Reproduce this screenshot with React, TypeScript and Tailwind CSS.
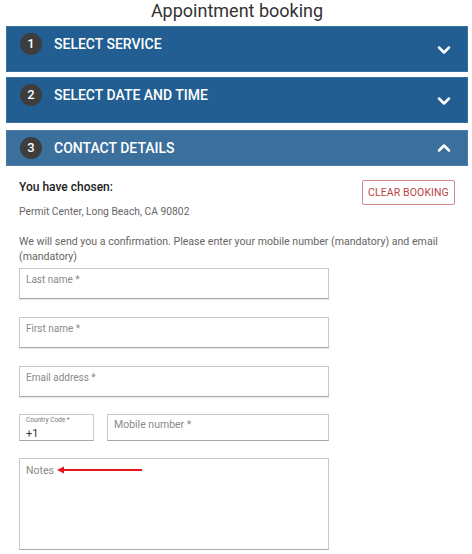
import React from 'react';
import { ChevronDown, ChevronUp } from 'lucide-react';

const font = "font-['Roboto','Liberation_Sans',sans-serif]";

interface StepProps {
  num: number;
  title: string;
  open?: boolean;
}

const Step: React.FC<StepProps> = ({ num, title, open }) => (
  <div
    className={`flex justify-between pl-[13px] pr-[13px] border ${
      open
        ? 'h-[36px] items-center bg-[#3b6f9c] border-[#4a7ba6]'
        : 'h-[46px] pt-[6px] bg-[#225e91] border-[#3a70a0]'
    }`}
  >
    <div className="flex items-start gap-[12px]">
      <div className="w-[22px] h-[22px] rounded-full bg-[#3d3d3d] text-white text-[13px] font-medium flex items-center justify-center">
        {num}
      </div>
      <span className="text-white text-[14px] font-medium leading-[22px]">{title}</span>
    </div>
    <div className={open ? '' : 'self-center -mt-[8px] pt-[4px]'}>
      {open ? (
        <ChevronUp size={20} strokeWidth={3} className="text-white" />
      ) : (
        <ChevronDown size={20} strokeWidth={3} className="text-white" />
      )}
    </div>
  </div>
);

const Field: React.FC<{ label: string; className?: string }> = ({ label, className }) => (
  <div className={`h-[31px] border border-[#c9c9c9] border-b-[#a9a9a9] shadow-[0_1px_1px_rgba(0,0,0,0.08)] px-[6px] pt-[5px] ${className ?? ''}`}>
    <span className="block text-[10px] leading-[12px] text-[#8a8a8a]">{label}</span>
  </div>
);

export default function App() {
  return (
    <div className={`${font} w-[472px] h-[554px] bg-white pl-[6px] pr-[4px] overflow-hidden`}>
      <h1 className="h-[24px] text-center text-[18px] leading-[22px] text-[#333]">Appointment booking</h1>

      <div className="mt-[2px]">
        <Step num={1} title="SELECT SERVICE" />
      </div>
      <div className="mt-[5px]">
        <Step num={2} title="SELECT DATE AND TIME" />
      </div>
      <div className="mt-[7px]">
        <Step num={3} title="CONTACT DETAILS" open />
      </div>

      <div className="px-[13px]">
        <div className="mt-[14px] flex justify-between items-start">
          <span className="text-[12px] font-medium text-[#222] leading-[14px]">You have chosen:</span>
          <button className="w-[93px] h-[25px] border border-[#d48a8a] rounded-[2px] text-[10.5px] text-[#b94444] tracking-[0.1px]">
            CLEAR BOOKING
          </button>
        </div>
        <p className="text-[10.3px] leading-[14px] text-[#666]">Permit Center, Long Beach, CA 90802</p>

        <p className="mt-[15px] text-[10.6px] leading-[15px] text-[#666]">
          We will send you a confirmation. Please enter your mobile number (mandatory) and email (mandatory)
        </p>

        <div className="w-[310px] mt-[4px] flex flex-col gap-[18px]">
          <Field label="Last name *" />
          <Field label="First name *" />
          <Field label="Email address *" />
        </div>

        <div className="w-[310px] mt-[17px] flex gap-[13px]">
          <div className="w-[75px] h-[27px] border border-[#c9c9c9] border-b-[#a9a9a9] px-[6px] pt-[1px] flex flex-col">
            <span className="text-[6.5px] leading-[8px] text-[#777]">Country Code *</span>
            <span className="text-[11px] leading-[14px] mt-[3px] text-[#333]">+1</span>
          </div>
          <div className="flex-1 h-[27px] border border-[#c9c9c9] border-b-[#a9a9a9] px-[6px] pt-[3px]">
            <span className="block text-[10.5px] leading-[13px] text-[#8a8a8a]">Mobile number *</span>
          </div>
        </div>

        <div className="relative w-[310px] h-[92px] mt-[17px] border border-[#c9c9c9] border-b-[#a9a9a9] px-[6px] pt-[5px]">
          <span className="block text-[10.5px] leading-[13px] text-[#8a8a8a]">Notes</span>
          <svg className="absolute left-[37px] top-[6px]" width="86" height="10" viewBox="0 0 86 10">
            <line x1="5" y1="5" x2="85" y2="5" stroke="#e8141a" strokeWidth="2" />
            <polygon points="0,5 7,1.5 7,8.5" fill="#e8141a" />
          </svg>
        </div>
      </div>
    </div>
  );
}
